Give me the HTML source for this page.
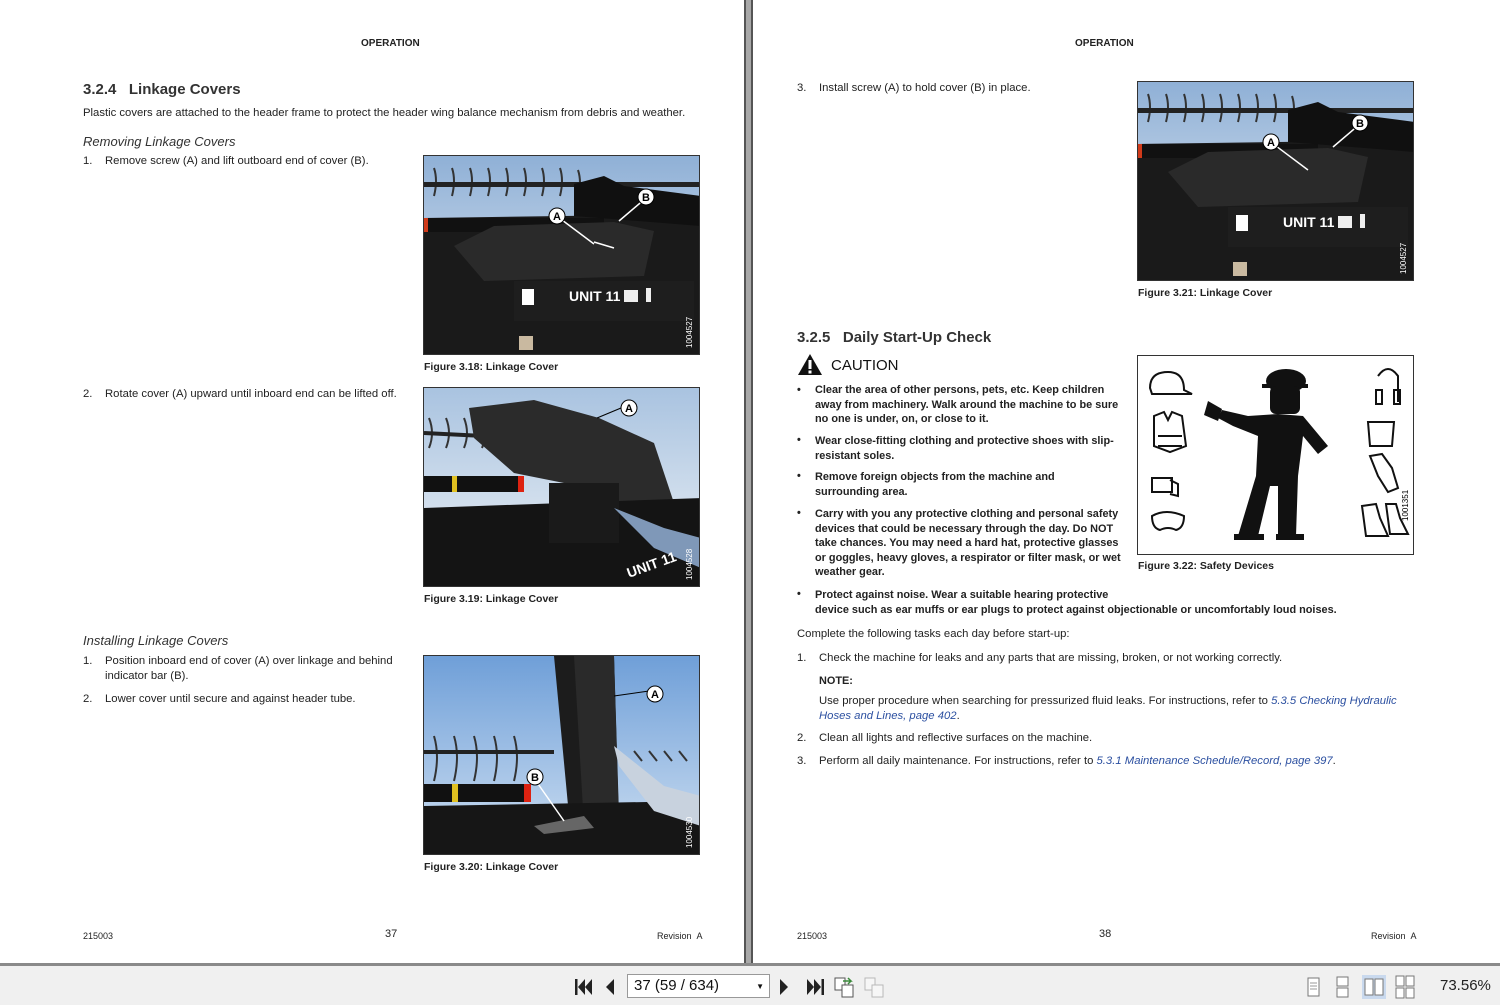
<!DOCTYPE html>
<html><head><meta charset="utf-8">
<style>
*{margin:0;padding:0;box-sizing:border-box}
body{width:1500px;height:1005px;position:relative;background:#fff;font-family:"Liberation Sans",sans-serif;color:#222;overflow:hidden;font-size:11.3px}
.a{position:absolute;white-space:nowrap}
.n{display:inline-block;width:22px}
.h{font-weight:bold;font-size:10px}
.sec{font-size:15px;font-weight:bold;color:#333}
.it{font-style:italic;font-size:13px;color:#333}
.cap{font-weight:bold;font-size:10.5px;color:#222}
.b{font-weight:bold;font-size:10.9px}
.lnk{color:#2b4fa0;font-style:italic}
.ph{position:absolute;border:1px solid #333;overflow:hidden;background:#000}
.ph svg{display:block}
.small{font-size:9px}
</style></head><body>

<div class="a" style="left:744px;top:0;width:9px;height:965px;background:#a8a8a8;border-left:2px solid #555;border-right:2px solid #555"></div>
<div class="a" style="left:0;top:963px;width:1500px;height:3px;background:#8a8a8a"></div>
<div class="a" style="left:0;top:966px;width:1500px;height:39px;background:#f0f0f0"></div>

<!-- LEFT PAGE -->
<div class="a h" style="left:361px;top:38px">OPERATION</div>
<div class="a sec" style="left:83px;top:81px">3.2.4&nbsp;&nbsp;&nbsp;Linkage Covers</div>
<div class="a" style="left:83px;top:107px">Plastic covers are attached to the header frame to protect the header wing balance mechanism from debris and weather.</div>
<div class="a it" style="left:83px;top:134px">Removing Linkage Covers</div>
<div class="a" style="left:83px;top:155px"><span class="n">1.</span>Remove screw (A) and lift outboard end of cover (B).</div>
<div class="a" style="left:83px;top:388px"><span class="n">2.</span>Rotate cover (A) upward until inboard end can be lifted off.</div>
<div class="a it" style="left:83px;top:633px">Installing Linkage Covers</div>
<div class="a" style="left:83px;top:655px"><span class="n">1.</span>Position inboard end of cover (A) over linkage and behind</div>
<div class="a" style="left:105px;top:670px">indicator bar (B).</div>
<div class="a" style="left:83px;top:693px"><span class="n">2.</span>Lower cover until secure and against header tube.</div>

<!-- Fig 3.18 -->
<div class="ph" style="left:423px;top:155px;width:277px;height:200px">
<svg width="277" height="200" viewBox="0 0 277 200">
<defs><linearGradient id="sk" x1="0" y1="0" x2="0" y2="1"><stop offset="0" stop-color="#8fb0d6"/><stop offset="1" stop-color="#e6edf5"/></linearGradient></defs>
<rect width="277" height="200" fill="url(#sk)"/>
<g stroke="#333" stroke-width="2" fill="none">
<path d="M10 12 q4 12 0 28M28 12 q4 12 0 28M46 12 q4 12 0 28M64 12 q4 12 0 28M82 12 q4 12 0 28M100 12 q4 12 0 28M118 12 q4 12 0 28M136 12 q4 12 0 28M154 14 q4 12 0 28"/></g>
<rect x="0" y="26" width="277" height="5" fill="#222"/>
<path d="M0 62 L277 58 L277 200 L0 200Z" fill="#1a1a1a"/>
<rect x="0" y="62" width="180" height="14" fill="#111"/>
<rect x="0" y="62" width="4" height="14" fill="#d03a1a"/>
<path d="M30 90 L70 70 L190 66 L230 75 L220 120 L60 125Z" fill="#2a2a2a"/>
<path d="M150 28 L180 20 L200 30 L277 40 L277 70 L150 60Z" fill="#101010"/>
<rect x="90" y="125" width="180" height="40" fill="#1e1e1e"/>
<rect x="98" y="133" width="12" height="16" fill="#fff"/>
<text x="145" y="145" fill="#fff" font-family="Liberation Sans" font-weight="bold" font-size="14">UNIT 11</text>
<rect x="200" y="134" width="14" height="12" fill="#eee"/><rect x="222" y="132" width="5" height="14" fill="#eee"/>
<rect x="95" y="180" width="14" height="14" fill="#c9b9a0"/>
<path d="M170 86 L190 92 M130 58 l40 30" stroke="#fff" stroke-width="1.5"/>
<path d="M222 42 L195 65" stroke="#fff" stroke-width="1.5"/>
<circle cx="133" cy="60" r="8" fill="#fff" stroke="#000"/><text x="133" y="64" text-anchor="middle" font-size="11" font-family="Liberation Sans" font-weight="bold">A</text>
<circle cx="222" cy="41" r="8" fill="#fff" stroke="#000"/><text x="222" y="45" text-anchor="middle" font-size="11" font-family="Liberation Sans" font-weight="bold">B</text>
<text x="268" y="192" fill="#fff" font-size="8" transform="rotate(-90 268 192)" font-family="Liberation Sans">1004527</text>
</svg></div>
<div class="a cap" style="left:424px;top:361px">Figure 3.18: Linkage Cover</div>

<!-- Fig 3.19 -->
<div class="ph" style="left:423px;top:387px;width:277px;height:200px">
<svg width="277" height="200" viewBox="0 0 277 200">
<defs><linearGradient id="sk2" x1="0" y1="0" x2="0" y2="1"><stop offset="0" stop-color="#a9c3e0"/><stop offset="1" stop-color="#eef2f6"/></linearGradient></defs>
<rect width="277" height="200" fill="url(#sk2)"/>
<g stroke="#333" stroke-width="2" fill="none"><path d="M5 30 q6 15 0 30M22 30 q6 15 0 30M40 30 q6 15 0 30M58 30 q6 15 0 30M76 30 q6 15 0 30"/></g>
<path d="M0 45 L100 50" stroke="#222" stroke-width="4"/>
<path d="M45 20 L110 12 L175 30 L230 55 L250 115 L185 135 L140 95 L90 85 L50 50Z" fill="#2b2b2b"/>
<rect x="0" y="88" width="100" height="16" fill="#111"/>
<rect x="28" y="88" width="5" height="16" fill="#e0c020"/>
<rect x="94" y="88" width="6" height="16" fill="#d21"/>
<path d="M0 120 L277 110 L277 200 L0 200Z" fill="#141414"/>
<rect x="125" y="95" width="70" height="60" fill="#1a1a1a"/>
<path d="M190 120 L240 140 L277 150 L277 180 L230 160Z" fill="#7f98b8"/>
<text x="205" y="190" fill="#fff" font-weight="bold" font-size="14" font-family="Liberation Sans" transform="rotate(-20 205 190)">UNIT 11</text>
<path d="M173 30 L197 20" stroke="#000" stroke-width="1"/>
<circle cx="205" cy="20" r="8" fill="#fff" stroke="#000"/><text x="205" y="24" text-anchor="middle" font-size="11" font-family="Liberation Sans" font-weight="bold">A</text>
<text x="268" y="192" fill="#fff" font-size="8" transform="rotate(-90 268 192)" font-family="Liberation Sans">1004528</text>
</svg></div>
<div class="a cap" style="left:424px;top:593px">Figure 3.19: Linkage Cover</div>

<!-- Fig 3.20 -->
<div class="ph" style="left:423px;top:655px;width:277px;height:200px">
<svg width="277" height="200" viewBox="0 0 277 200">
<defs><linearGradient id="sk3" x1="0" y1="0" x2="0" y2="1"><stop offset="0" stop-color="#6f9fd8"/><stop offset="1" stop-color="#cfe0f2"/></linearGradient></defs>
<rect width="277" height="200" fill="url(#sk3)"/>
<g stroke="#333" stroke-width="2" fill="none"><path d="M10 80 q6 20 0 45M30 80 q6 20 0 45M50 80 q6 20 0 45M70 80 q6 20 0 45M90 80 q6 20 0 45M210 95 l8 10M225 95 l8 10M240 95 l8 10M255 95 l8 10"/></g>
<rect x="0" y="94" width="130" height="4" fill="#222"/>
<path d="M130 0 L190 0 L195 160 L145 160Z" fill="#1c1c1c"/>
<path d="M150 0 L190 0 L195 170 L160 170Z" fill="#2a2a2a"/>
<rect x="0" y="128" width="105" height="18" fill="#111"/>
<rect x="28" y="128" width="6" height="18" fill="#e0c020"/><rect x="100" y="128" width="7" height="18" fill="#d21"/>
<path d="M0 150 L277 145 L277 200 L0 200Z" fill="#161616"/>
<path d="M190 90 L240 130 L277 140 L277 170 L230 155 L195 110Z" fill="#c8d2de"/>
<path d="M110 170 L160 160 L170 172 L120 178Z" fill="#666"/>
<path d="M190 40 L225 35" stroke="#000"/><path d="M112 125 L140 165" stroke="#fff" stroke-width="1.5"/>
<circle cx="231" cy="38" r="8" fill="#fff" stroke="#000"/><text x="231" y="42" text-anchor="middle" font-size="11" font-family="Liberation Sans" font-weight="bold">A</text>
<circle cx="111" cy="121" r="8" fill="#fff" stroke="#000"/><text x="111" y="125" text-anchor="middle" font-size="11" font-family="Liberation Sans" font-weight="bold">B</text>
<text x="268" y="192" fill="#fff" font-size="8" transform="rotate(-90 268 192)" font-family="Liberation Sans">1004530</text>
</svg></div>
<div class="a cap" style="left:424px;top:861px">Figure 3.20: Linkage Cover</div>

<div class="a small" style="left:83px;top:931px">215003</div>
<div class="a" style="left:385px;top:928px;font-size:11px">37</div>
<div class="a small" style="left:657px;top:931px">Revision&nbsp;&nbsp;A</div>

<!-- RIGHT PAGE -->
<div class="a h" style="left:1075px;top:38px">OPERATION</div>
<div class="a" style="left:797px;top:82px"><span class="n">3.</span>Install screw (A) to hold cover (B) in place.</div>

<!-- Fig 3.21 -->
<div class="ph" style="left:1137px;top:81px;width:277px;height:200px">
<svg width="277" height="200" viewBox="0 0 277 200">
<defs><linearGradient id="sk4" x1="0" y1="0" x2="0" y2="1"><stop offset="0" stop-color="#8fb0d6"/><stop offset="1" stop-color="#e6edf5"/></linearGradient></defs>
<rect width="277" height="200" fill="url(#sk4)"/>
<g stroke="#333" stroke-width="2" fill="none">
<path d="M10 12 q4 12 0 28M28 12 q4 12 0 28M46 12 q4 12 0 28M64 12 q4 12 0 28M82 12 q4 12 0 28M100 12 q4 12 0 28M118 12 q4 12 0 28M136 12 q4 12 0 28M154 14 q4 12 0 28"/></g>
<rect x="0" y="26" width="277" height="5" fill="#222"/>
<path d="M0 62 L277 58 L277 200 L0 200Z" fill="#1a1a1a"/>
<rect x="0" y="62" width="180" height="14" fill="#111"/>
<rect x="0" y="62" width="4" height="14" fill="#d03a1a"/>
<path d="M30 90 L70 70 L190 66 L230 75 L220 120 L60 125Z" fill="#2a2a2a"/>
<path d="M150 28 L180 20 L200 30 L277 40 L277 70 L150 60Z" fill="#101010"/>
<rect x="90" y="125" width="180" height="40" fill="#1e1e1e"/>
<rect x="98" y="133" width="12" height="16" fill="#fff"/>
<text x="145" y="145" fill="#fff" font-family="Liberation Sans" font-weight="bold" font-size="14">UNIT 11</text>
<rect x="200" y="134" width="14" height="12" fill="#eee"/><rect x="222" y="132" width="5" height="14" fill="#eee"/>
<rect x="95" y="180" width="14" height="14" fill="#c9b9a0"/>
<path d="M130 58 l40 30" stroke="#fff" stroke-width="1.5"/>
<path d="M222 42 L195 65" stroke="#fff" stroke-width="1.5"/>
<circle cx="133" cy="60" r="8" fill="#fff" stroke="#000"/><text x="133" y="64" text-anchor="middle" font-size="11" font-family="Liberation Sans" font-weight="bold">A</text>
<circle cx="222" cy="41" r="8" fill="#fff" stroke="#000"/><text x="222" y="45" text-anchor="middle" font-size="11" font-family="Liberation Sans" font-weight="bold">B</text>
<text x="268" y="192" fill="#fff" font-size="8" transform="rotate(-90 268 192)" font-family="Liberation Sans">1004527</text>
</svg></div>
<div class="a cap" style="left:1138px;top:287px">Figure 3.21: Linkage Cover</div>

<div class="a sec" style="left:797px;top:329px">3.2.5&nbsp;&nbsp;&nbsp;Daily Start-Up Check</div>
<svg class="a" style="left:797px;top:353px" width="26" height="23" viewBox="0 0 26 23"><path d="M13 1 L25 22 L1 22Z" fill="#111"/><rect x="11.5" y="7" width="3" height="9" fill="#fff"/><rect x="11.5" y="17.5" width="3" height="3" fill="#fff"/></svg>
<div class="a" style="left:831px;top:357px;font-size:15px;color:#111">CAUTION</div>
<div class="a b" style="left:797px;top:383px;line-height:14.5px">•</div>
<div class="a b" style="left:815px;top:383px;line-height:14.5px">Clear the area of other persons, pets, etc. Keep children<br>away from machinery. Walk around the machine to be sure<br>no one is under, on, or close to it.</div>
<div class="a b" style="left:797px;top:434px">•</div>
<div class="a b" style="left:815px;top:434px;line-height:14.5px">Wear close-fitting clothing and protective shoes with slip-<br>resistant soles.</div>
<div class="a b" style="left:797px;top:470px">•</div>
<div class="a b" style="left:815px;top:470px;line-height:14.5px">Remove foreign objects from the machine and<br>surrounding area.</div>
<div class="a b" style="left:797px;top:507px">•</div>
<div class="a b" style="left:815px;top:507px;line-height:14.5px">Carry with you any protective clothing and personal safety<br>devices that could be necessary through the day. Do NOT<br>take chances. You may need a hard hat, protective glasses<br>or goggles, heavy gloves, a respirator or filter mask, or wet<br>weather gear.</div>
<div class="a b" style="left:797px;top:588px">•</div>
<div class="a b" style="left:815px;top:588px;line-height:14.5px">Protect against noise. Wear a suitable hearing protective<br>device such as ear muffs or ear plugs to protect against objectionable or uncomfortably loud noises.</div>

<!-- Fig 3.22 -->
<div class="ph" style="left:1137px;top:355px;width:277px;height:200px;background:#fff">
<svg width="277" height="200" viewBox="0 0 277 200">
<g fill="none" stroke="#111" stroke-width="2">
<path d="M12 32 q0-16 18-16 q16 0 16 18 l8 4 l-40 0z"/>
<path d="M16 60 l10-4 l4 8 l4-8 l10 4 l4 30 l-16 6 l-16-6z"/><path d="M20 80 h24M20 90 h24"/>
<path d="M14 122 h20 v14 h-20z"/><path d="M32 124 l8 4 l0 12 l-8-2"/>
<path d="M14 160 q14-8 32 0 q0 12 -8 14 q-8-4 -16 0 q-8-2 -8-14z"/>
<path d="M240 20 q10-14 20 0 v26 M238 34 h6 v14 h-6z M256 34 h6 v14 h-6z"/>
<path d="M230 66 h26 l-2 24 h-22z"/>
<path d="M232 100 l8 20 l10 16 l10-4 l-6-20 l-10-14z"/>
<path d="M224 150 l4 30 h22 l-8-18 l-4-14z M248 148 l4 30 h18 l-8-16 l-4-14z"/>
</g>
<g fill="#111">
<ellipse cx="148" cy="25" rx="20" ry="12"/><rect x="124" y="28" width="46" height="4"/>
<rect x="132" y="30" width="30" height="28" rx="6"/>
<path d="M140 58 L165 60 L190 90 L180 98 L165 80 L160 120 L158 180 L140 180 L140 130 L132 130 L120 180 L100 180 L118 120 L120 80 L95 70 L80 62 L84 54 L110 60 Z"/>
<path d="M70 45 l14 8 l-4 12 l-14-6 z"/>
<rect x="96" y="178" width="30" height="6"/><rect x="138" y="178" width="28" height="6"/>
</g>
<text x="270" y="165" font-size="8" transform="rotate(-90 270 165)" font-family="Liberation Sans">1001351</text>
</svg></div>
<div class="a cap" style="left:1138px;top:560px">Figure 3.22: Safety Devices</div>

<div class="a" style="left:797px;top:628px">Complete the following tasks each day before start-up:</div>
<div class="a" style="left:797px;top:652px"><span class="n">1.</span>Check the machine for leaks and any parts that are missing, broken, or not working correctly.</div>
<div class="a b" style="left:819px;top:675px">NOTE:</div>
<div class="a" style="left:819px;top:694px;line-height:14.5px">Use proper procedure when searching for pressurized fluid leaks. For instructions, refer to <span class="lnk">5.3.5 Checking Hydraulic</span><br><span class="lnk">Hoses and Lines, page 402</span>.</div>
<div class="a" style="left:797px;top:732px"><span class="n">2.</span>Clean all lights and reflective surfaces on the machine.</div>
<div class="a" style="left:797px;top:755px"><span class="n">3.</span>Perform all daily maintenance. For instructions, refer to <span class="lnk">5.3.1 Maintenance Schedule/Record, page 397</span>.</div>

<div class="a small" style="left:797px;top:931px">215003</div>
<div class="a" style="left:1099px;top:928px;font-size:11px">38</div>
<div class="a small" style="left:1371px;top:931px">Revision&nbsp;&nbsp;A</div>

<!-- toolbar -->
<svg class="a" style="left:572px;top:977px" width="24" height="20" viewBox="0 0 24 20"><rect x="3" y="2" width="2.5" height="16" fill="#222"/><path d="M13 2 L6 10 L13 18Z M20 2 L13 10 L20 18Z" fill="#222"/></svg>
<svg class="a" style="left:603px;top:977px" width="14" height="20" viewBox="0 0 14 20"><path d="M11 2 L3 10 L11 18Z" fill="#222"/></svg>
<div class="a" style="left:627px;top:974px;width:143px;height:24px;border:1px solid #999;background:#fff;font-size:15px;padding:2px 6px;color:#111">37 (59 / 634)<span style="position:absolute;right:5px;top:7px;font-size:8px">▼</span></div>
<svg class="a" style="left:777px;top:977px" width="14" height="20" viewBox="0 0 14 20"><path d="M3 2 L11 10 L3 18Z" fill="#222"/></svg>
<svg class="a" style="left:803px;top:977px" width="24" height="20" viewBox="0 0 24 20"><path d="M4 2 L11 10 L4 18Z M11 2 L18 10 L11 18Z" fill="#222"/><rect x="18.5" y="2" width="2.5" height="16" fill="#222"/></svg>
<svg class="a" style="left:833px;top:975px" width="24" height="24" viewBox="0 0 24 24"><rect x="2" y="3" width="10" height="12" fill="#fff" stroke="#555"/><rect x="9" y="10" width="11" height="12" fill="#fff" stroke="#555"/><path d="M10 6 h8 l-3-3 M18 6 l-3 3" stroke="#3a8a3a" fill="none" stroke-width="1.5"/></svg>
<svg class="a" style="left:862px;top:975px" width="24" height="24" viewBox="0 0 24 24" opacity=".45"><rect x="3" y="3" width="10" height="12" fill="#fff" stroke="#777"/><rect x="10" y="10" width="11" height="12" fill="#fff" stroke="#777"/></svg>
<svg class="a" style="left:1305px;top:976px" width="18" height="22" viewBox="0 0 18 22"><rect x="3" y="2" width="11" height="18" fill="#fff" stroke="#777"/><path d="M5 7h7M5 10h7M5 13h7" stroke="#999"/></svg>
<svg class="a" style="left:1333px;top:976px" width="20" height="22" viewBox="0 0 20 22"><rect x="4" y="1" width="11" height="9" fill="#fff" stroke="#777"/><rect x="4" y="12" width="11" height="9" fill="#fff" stroke="#777"/></svg>
<div class="a" style="left:1362px;top:975px;width:24px;height:24px;background:#c9d9ee"></div>
<svg class="a" style="left:1364px;top:976px" width="20" height="22" viewBox="0 0 20 22"><rect x="1" y="3" width="8" height="16" fill="#fff" stroke="#777"/><rect x="11" y="3" width="8" height="16" fill="#fff" stroke="#777"/></svg>
<svg class="a" style="left:1394px;top:975px" width="22" height="24" viewBox="0 0 22 24"><rect x="2" y="1" width="8" height="10" fill="#fff" stroke="#777"/><rect x="12" y="1" width="8" height="10" fill="#fff" stroke="#777"/><rect x="2" y="13" width="8" height="10" fill="#fff" stroke="#777"/><rect x="12" y="13" width="8" height="10" fill="#fff" stroke="#777"/></svg>
<div class="a" style="left:1440px;top:977px;font-size:15px;color:#222">73.56%</div>
</body></html>
